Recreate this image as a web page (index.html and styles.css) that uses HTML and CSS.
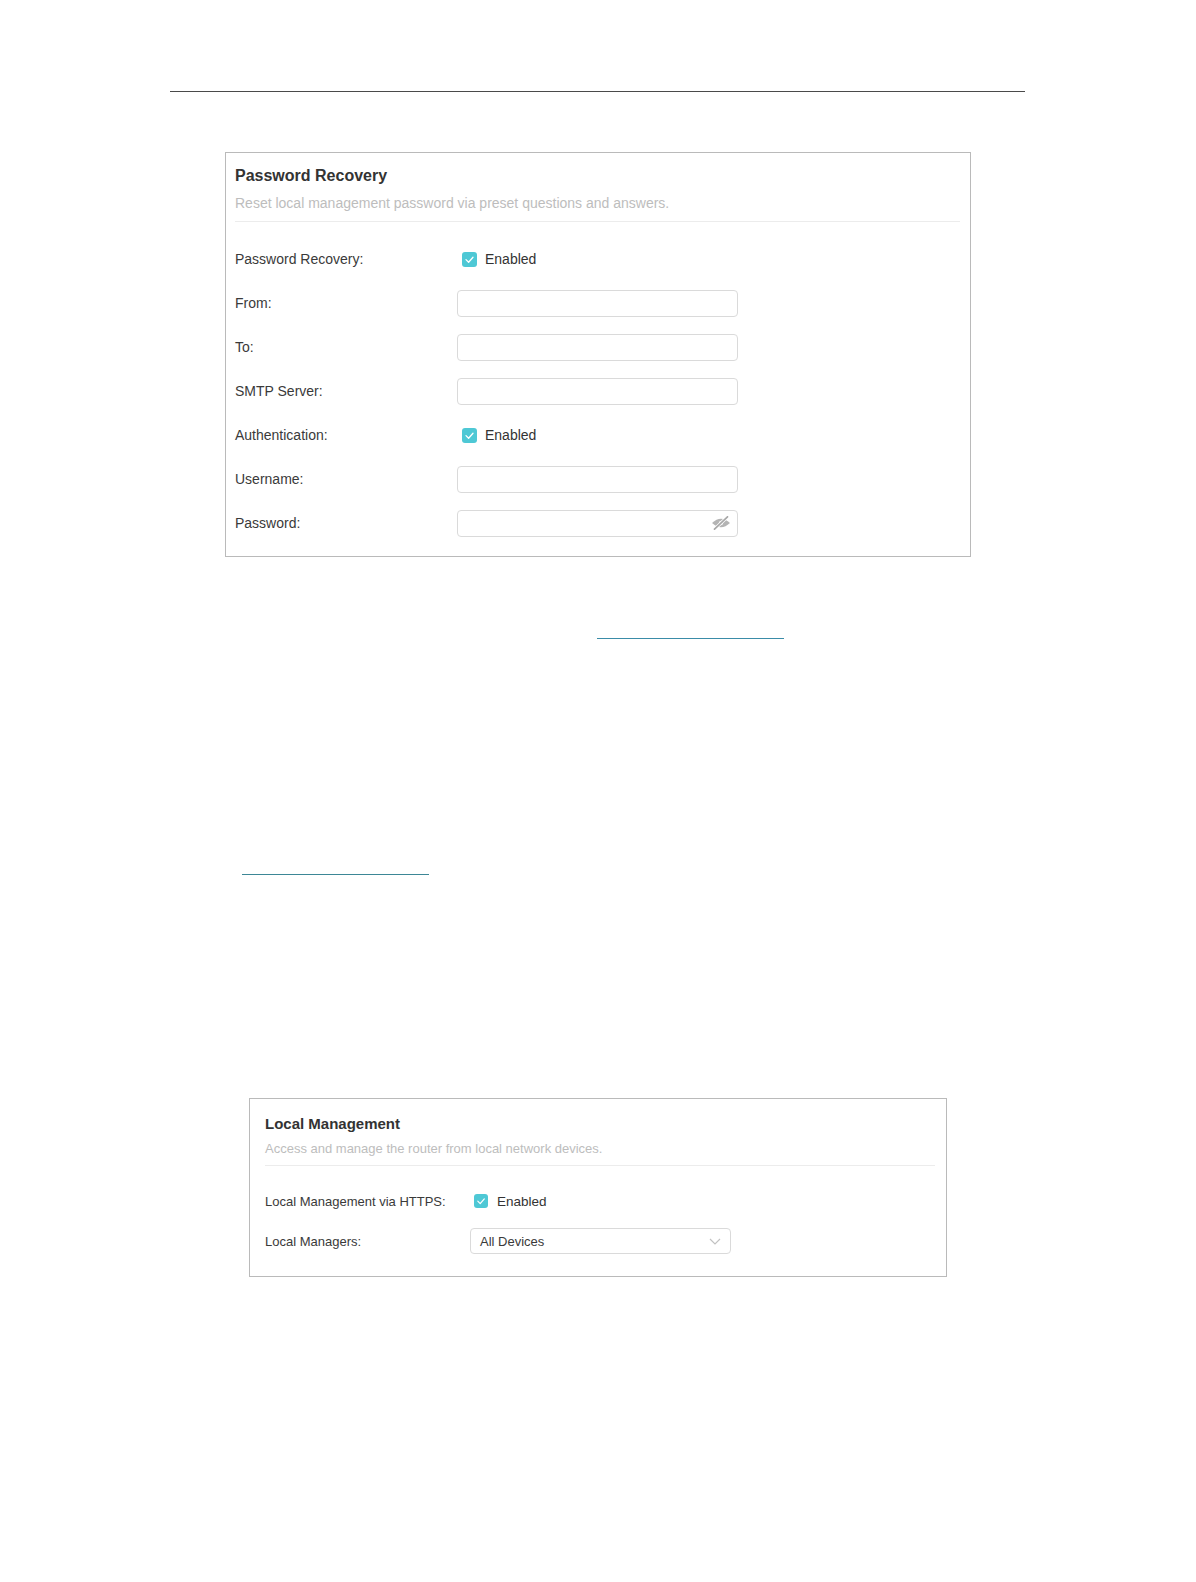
FILE: index.html
```html
<!DOCTYPE html>
<html lang="en">
<head>
<meta charset="utf-8">
<title>Password Recovery and Local Management</title>
<link rel="stylesheet" href="styles.css">
</head>
<body>
<div class="page">
  <div class="header-rule"></div>

  <section class="panel panel-recovery">
    <div class="panel-head">
      <h2 class="panel-title">Password Recovery</h2>
      <p class="panel-desc">Reset local management password via preset questions and answers.</p>
    </div>
    <div class="form">
      <div class="row">
        <span class="label">Password Recovery:</span>
        <label class="check"><span class="box"><svg viewBox="0 0 15 15" width="15" height="15"><polyline points="4,7.6 6.6,10.2 11,5.2" fill="none" stroke="#fff" stroke-width="1.3" stroke-linecap="round" stroke-linejoin="round"/></svg></span>Enabled</label>
      </div>
      <div class="row">
        <span class="label">From:</span>
        <div class="input"></div>
      </div>
      <div class="row">
        <span class="label">To:</span>
        <div class="input"></div>
      </div>
      <div class="row">
        <span class="label">SMTP Server:</span>
        <div class="input"></div>
      </div>
      <div class="row">
        <span class="label">Authentication:</span>
        <label class="check"><span class="box"><svg viewBox="0 0 15 15" width="15" height="15"><polyline points="4,7.6 6.6,10.2 11,5.2" fill="none" stroke="#fff" stroke-width="1.3" stroke-linecap="round" stroke-linejoin="round"/></svg></span>Enabled</label>
      </div>
      <div class="row">
        <span class="label">Username:</span>
        <div class="input"></div>
      </div>
      <div class="row">
        <span class="label">Password:</span>
        <div class="input input-password">
          <svg class="eye" viewBox="0 0 20 14" width="20" height="14">
            <path d="M1 7 Q10 -1.5 19 7 Q10 15.5 1 7Z" fill="#b4b4b4"/>
            <circle cx="10" cy="7" r="2.2" fill="#ececec"/>
            <line x1="3.5" y1="13.2" x2="16.5" y2="0.8" stroke="#fff" stroke-width="3.2"/>
            <line x1="3.5" y1="13.2" x2="16.5" y2="0.8" stroke="#a8a8a8" stroke-width="1.7" stroke-linecap="round"/>
          </svg>
        </div>
      </div>
    </div>
  </section>

  <div class="link-line link-one"></div>
  <div class="link-line link-two"></div>

  <section class="panel panel-local">
    <div class="panel-head">
      <h2 class="panel-title">Local Management</h2>
      <p class="panel-desc">Access and manage the router from local network devices.</p>
    </div>
    <div class="form">
      <div class="row">
        <span class="label">Local Management via HTTPS:</span>
        <label class="check"><span class="box"><svg viewBox="0 0 14 14" width="14" height="14"><polyline points="3.8,7.2 6.2,9.6 10.3,4.9" fill="none" stroke="#fff" stroke-width="1.2" stroke-linecap="round" stroke-linejoin="round"/></svg></span>Enabled</label>
      </div>
      <div class="row">
        <span class="label">Local Managers:</span>
        <div class="select">
          <span class="select-value">All Devices</span>
          <svg class="chevron" viewBox="0 0 12 7" width="12" height="7"><polyline points="1,1 6,6 11,1" fill="none" stroke="#c2c2c2" stroke-width="1.2"/></svg>
        </div>
      </div>
    </div>
  </section>
</div>
</body>
</html>
```

FILE: styles.css
```css
html, body {
  margin: 0;
  padding: 0;
  background: #ffffff;
}

body {
  font-family: "Liberation Sans", Arial, sans-serif;
  color: #333333;
}

.page {
  width: 1196px;
  padding-top: 91px;
  padding-bottom: 200px;
}

.header-rule {
  margin-left: 170px;
  width: 855px;
  border-top: 1px solid #4a4a4a;
}

.panel {
  box-sizing: border-box;
  border: 1px solid #bababa;
  background: #ffffff;
}

.panel-head {
  border-bottom: 1px solid #ececec;
  padding-bottom: 8px;
}

.panel-title {
  margin: 0;
  font-weight: bold;
  color: #333333;
}

.panel-desc {
  margin: 0;
  color: #bdbdbd;
}

.form {
  display: flex;
  flex-direction: column;
}

.row {
  display: flex;
  align-items: center;
}

.label {
  flex: none;
  color: #3a3a3a;
}

.check {
  display: flex;
  align-items: center;
  color: #333333;
}

.box {
  display: flex;
  align-items: center;
  justify-content: center;
  background: #4ec8d5;
  border-radius: 3px;
  flex: none;
}

.box svg {
  display: block;
}

.input {
  box-sizing: border-box;
  width: 281px;
  height: 27px;
  border: 1px solid #dadada;
  border-radius: 4px;
  background: #ffffff;
}

.input-password {
  display: flex;
  align-items: center;
  justify-content: flex-end;
  padding-right: 6px;
}

.eye {
  display: block;
}

/* Password Recovery panel */
.panel-recovery {
  margin-top: 60px;
  margin-left: 225px;
  width: 746px;
  padding: 13px 10px 11px 9px;
}

.panel-recovery .panel-title {
  font-size: 16px;
  line-height: 20px;
}

.panel-recovery .panel-desc {
  font-size: 14px;
  line-height: 20px;
  margin-top: 7px;
}

.panel-recovery .form {
  padding-top: 15px;
}

.panel-recovery .row {
  height: 44px;
}

.panel-recovery .label {
  width: 222px;
  font-size: 14px;
}

.panel-recovery .check {
  margin-left: 5px;
  font-size: 14px;
  gap: 8px;
}

.panel-recovery .box {
  width: 15px;
  height: 15px;
}

/* Link underlines */
.link-line {
  width: 187px;
  border-top: 1px solid #3a8ca8;
}

.link-one {
  margin-top: 81px;
  margin-left: 597px;
}

.link-two {
  margin-top: 235px;
  margin-left: 242px;
  border-top-color: #3d8796;
}

/* Local Management panel */
.panel-local {
  margin-top: 223px;
  margin-left: 249px;
  width: 698px;
  padding: 15px 11px 15px 15px;
}

.panel-local .panel-head {
  padding-bottom: 7px;
}

.panel-local .panel-title {
  font-size: 15px;
  line-height: 20px;
}

.panel-local .panel-desc {
  font-size: 13px;
  line-height: 18px;
  margin-top: 6px;
}

.panel-local .form {
  padding-top: 15px;
}

.panel-local .row {
  height: 40px;
}

.panel-local .label {
  width: 205px;
  font-size: 13px;
}

.panel-local .check {
  margin-left: 4px;
  font-size: 13.5px;
  gap: 9px;
}

.panel-local .box {
  width: 14px;
  height: 14px;
}

.select {
  box-sizing: border-box;
  width: 261px;
  height: 26px;
  border: 1px solid #dadada;
  border-radius: 4px;
  display: flex;
  align-items: center;
  justify-content: space-between;
  padding: 0 9px 0 9px;
  font-size: 13px;
  color: #3a3a3a;
}

.chevron {
  display: block;
}
```
